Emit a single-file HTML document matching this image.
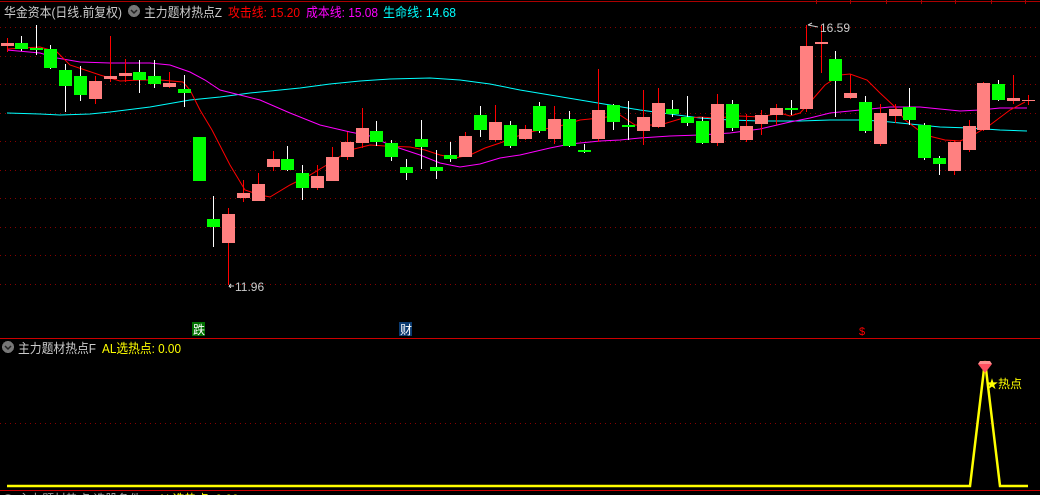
<!DOCTYPE html>
<html><head><meta charset="utf-8"><style>
html,body{margin:0;padding:0;background:#000;width:1040px;height:495px;overflow:hidden}
svg{display:block}
text{font-family:"Liberation Sans","Noto Sans CJK SC",sans-serif}
</style></head><body>
<svg width="1040" height="495" viewBox="0 0 1040 495" xmlns="http://www.w3.org/2000/svg" shape-rendering="crispEdges">
<rect width="1040" height="495" fill="#000"/>
<line x1="0" y1="1.5" x2="1040" y2="1.5" stroke="#a00" stroke-width="1"/>
<g stroke="#800" stroke-width="1" stroke-dasharray="1,4">
<line x1="0" y1="27.5" x2="1040" y2="27.5"/><line x1="0" y1="56.5" x2="1040" y2="56.5"/><line x1="0" y1="84.5" x2="1040" y2="84.5"/><line x1="0" y1="113.5" x2="1040" y2="113.5"/><line x1="0" y1="141.5" x2="1040" y2="141.5"/><line x1="0" y1="170.5" x2="1040" y2="170.5"/><line x1="0" y1="198.5" x2="1040" y2="198.5"/><line x1="0" y1="227.5" x2="1040" y2="227.5"/><line x1="0" y1="255.5" x2="1040" y2="255.5"/><line x1="0" y1="284.5" x2="1040" y2="284.5"/><line x1="0" y1="423.5" x2="1040" y2="423.5"/>
</g>
<line x1="0" y1="338.5" x2="1040" y2="338.5" stroke="#c00"/>
<line x1="0" y1="490.5" x2="1040" y2="490.5" stroke="#c00"/>
<g stroke="#a00"><line x1="816.5" y1="0" x2="816.5" y2="4"/><line x1="850.5" y1="0" x2="850.5" y2="4"/><line x1="886.5" y1="0" x2="886.5" y2="4"/><line x1="921.5" y1="0" x2="921.5" y2="4"/><line x1="955.5" y1="0" x2="955.5" y2="4"/><line x1="991.5" y1="0" x2="991.5" y2="4"/><line x1="1025.5" y1="0" x2="1025.5" y2="4"/></g>

<g fill="none" stroke-width="1" shape-rendering="auto">
<polyline stroke="#00ffff" points="7,113 40,114 60,115 90,114 110,112 150,107 190,100 220,97 250,93 300,88 330,84 360,81 390,79 430,78 460,80 490,84 520,90 550,95 580,100 610,105 640,110 670,114 700,118 730,120 760,121 800,121 830,120 860,120 880,121 900,123 940,127 970,128 1000,130 1027,131"/>
<polyline stroke="#ff00ff" points="7,50 40,53 57,58 80,62 110,63 150,63 170,65 190,72 205,80 220,90 240,95 260,100 290,113 320,125 350,132 370,136 390,145 420,155 440,163 460,167 480,164 500,158 520,155 550,148 570,144 600,141 620,140 640,138 670,136 700,135 730,133 760,129 790,122 810,118 830,113 850,111 870,109 890,107 920,107 940,109 960,111 980,110 1000,108 1027,108"/>
<polyline stroke="#ff0000" points="7,49 40,47 57,52 70,65 100,75 120,81 140,80 160,80 183,82 190,90 200,110 212,130 230,165 245,190 260,195 270,197 290,185 310,175 330,163 350,150 370,145 385,146 410,147 425,150 440,155 455,158 470,155 485,148 500,143 515,137 530,132 560,126 580,120 600,118 620,115 635,125 660,125 680,119 700,117 715,118 740,116 760,117 780,113 790,116 800,113 812,100 825,85 840,75 850,74 867,80 880,93 895,107 905,120 925,135 945,140 960,141 970,137 990,125 1010,110 1025,102"/>
</g>

<g>
<line x1="7.5" y1="38" x2="7.5" y2="52" stroke="#f00"/><rect x="1" y="43" width="13" height="3" fill="#ff8080"/>
<line x1="21.5" y1="36" x2="21.5" y2="51" stroke="#fff"/><rect x="15" y="43" width="13" height="6" fill="#00ff00"/>
<line x1="36.5" y1="25" x2="36.5" y2="55" stroke="#fff"/><rect x="30" y="48" width="13" height="2" fill="#00ff00"/>
<line x1="50.5" y1="45" x2="50.5" y2="69" stroke="#fff"/><rect x="44" y="49" width="13" height="19" fill="#00ff00"/>
<line x1="65.5" y1="64" x2="65.5" y2="112" stroke="#fff"/><rect x="59" y="70" width="13" height="16" fill="#00ff00"/>
<line x1="80.5" y1="66" x2="80.5" y2="101" stroke="#fff"/><rect x="74" y="76" width="13" height="19" fill="#00ff00"/>
<line x1="95.5" y1="76" x2="95.5" y2="104" stroke="#f00"/><rect x="89" y="81" width="13" height="18" fill="#ff8080"/>
<line x1="110.5" y1="36" x2="110.5" y2="82" stroke="#f00"/><rect x="104" y="76" width="13" height="3" fill="#ff8080"/>
<line x1="125.5" y1="59" x2="125.5" y2="82" stroke="#f00"/><rect x="119" y="73" width="13" height="3" fill="#ff8080"/>
<line x1="139.5" y1="60" x2="139.5" y2="93" stroke="#fff"/><rect x="133" y="72" width="13" height="8" fill="#00ff00"/>
<line x1="154.5" y1="60" x2="154.5" y2="88" stroke="#fff"/><rect x="148" y="76" width="13" height="8" fill="#00ff00"/>
<line x1="169.5" y1="72" x2="169.5" y2="88" stroke="#f00"/><rect x="163" y="83" width="13" height="4" fill="#ff8080"/>
<line x1="184.5" y1="75" x2="184.5" y2="107" stroke="#fff"/><rect x="178" y="89" width="13" height="4" fill="#00ff00"/>
<rect x="193" y="137" width="13" height="44" fill="#00ff00"/>
<line x1="213.5" y1="196" x2="213.5" y2="247" stroke="#fff"/><rect x="207" y="219" width="13" height="8" fill="#00ff00"/>
<line x1="228.5" y1="208" x2="228.5" y2="285" stroke="#f00"/><rect x="222" y="214" width="13" height="29" fill="#ff8080"/>
<line x1="243.5" y1="180" x2="243.5" y2="202" stroke="#f00"/><rect x="237" y="193" width="13" height="5" fill="#ff8080"/>
<line x1="258.5" y1="173" x2="258.5" y2="201" stroke="#f00"/><rect x="252" y="184" width="13" height="17" fill="#ff8080"/>
<line x1="273.5" y1="151" x2="273.5" y2="171" stroke="#f00"/><rect x="267" y="159" width="13" height="8" fill="#ff8080"/>
<line x1="287.5" y1="146" x2="287.5" y2="171" stroke="#fff"/><rect x="281" y="159" width="13" height="11" fill="#00ff00"/>
<line x1="302.5" y1="165" x2="302.5" y2="200" stroke="#fff"/><rect x="296" y="173" width="13" height="15" fill="#00ff00"/>
<line x1="317.5" y1="165" x2="317.5" y2="190" stroke="#f00"/><rect x="311" y="176" width="13" height="12" fill="#ff8080"/>
<line x1="332.5" y1="147" x2="332.5" y2="181" stroke="#f00"/><rect x="326" y="157" width="13" height="24" fill="#ff8080"/>
<line x1="347.5" y1="132" x2="347.5" y2="160" stroke="#f00"/><rect x="341" y="142" width="13" height="15" fill="#ff8080"/>
<line x1="362.5" y1="108" x2="362.5" y2="148" stroke="#f00"/><rect x="356" y="128" width="13" height="15" fill="#ff8080"/>
<line x1="376.5" y1="121" x2="376.5" y2="146" stroke="#fff"/><rect x="370" y="131" width="13" height="11" fill="#00ff00"/>
<line x1="391.5" y1="140" x2="391.5" y2="161" stroke="#fff"/><rect x="385" y="143" width="13" height="14" fill="#00ff00"/>
<line x1="406.5" y1="159" x2="406.5" y2="180" stroke="#fff"/><rect x="400" y="167" width="13" height="6" fill="#00ff00"/>
<line x1="421.5" y1="120" x2="421.5" y2="169" stroke="#fff"/><rect x="415" y="139" width="13" height="8" fill="#00ff00"/>
<line x1="436.5" y1="150" x2="436.5" y2="179" stroke="#fff"/><rect x="430" y="167" width="13" height="4" fill="#00ff00"/>
<line x1="450.5" y1="142" x2="450.5" y2="162" stroke="#fff"/><rect x="444" y="155" width="13" height="4" fill="#00ff00"/>
<line x1="465.5" y1="132" x2="465.5" y2="157" stroke="#f00"/><rect x="459" y="136" width="13" height="21" fill="#ff8080"/>
<line x1="480.5" y1="106" x2="480.5" y2="137" stroke="#fff"/><rect x="474" y="115" width="13" height="15" fill="#00ff00"/>
<line x1="495.5" y1="105" x2="495.5" y2="142" stroke="#f00"/><rect x="489" y="122" width="13" height="18" fill="#ff8080"/>
<line x1="510.5" y1="121" x2="510.5" y2="148" stroke="#fff"/><rect x="504" y="125" width="13" height="21" fill="#00ff00"/>
<line x1="525.5" y1="125" x2="525.5" y2="140" stroke="#f00"/><rect x="519" y="129" width="13" height="10" fill="#ff8080"/>
<line x1="539.5" y1="102" x2="539.5" y2="133" stroke="#fff"/><rect x="533" y="106" width="13" height="25" fill="#00ff00"/>
<line x1="554.5" y1="106" x2="554.5" y2="144" stroke="#f00"/><rect x="548" y="119" width="13" height="20" fill="#ff8080"/>
<line x1="569.5" y1="111" x2="569.5" y2="147" stroke="#fff"/><rect x="563" y="119" width="13" height="27" fill="#00ff00"/>
<line x1="584.5" y1="144" x2="584.5" y2="153" stroke="#fff"/><rect x="578" y="150" width="13" height="2" fill="#00ff00"/>
<line x1="598.5" y1="69" x2="598.5" y2="142" stroke="#f00"/><rect x="592" y="110" width="13" height="29" fill="#ff8080"/>
<line x1="613.5" y1="104" x2="613.5" y2="130" stroke="#fff"/><rect x="607" y="105" width="13" height="17" fill="#00ff00"/>
<line x1="628.5" y1="101" x2="628.5" y2="140" stroke="#fff"/><rect x="622" y="125" width="13" height="2" fill="#00ff00"/>
<line x1="643.5" y1="90" x2="643.5" y2="145" stroke="#f00"/><rect x="637" y="117" width="13" height="14" fill="#ff8080"/>
<line x1="658.5" y1="88" x2="658.5" y2="128" stroke="#f00"/><rect x="652" y="103" width="13" height="24" fill="#ff8080"/>
<line x1="672.5" y1="100" x2="672.5" y2="117" stroke="#fff"/><rect x="666" y="109" width="13" height="5" fill="#00ff00"/>
<line x1="687.5" y1="96" x2="687.5" y2="126" stroke="#fff"/><rect x="681" y="117" width="13" height="6" fill="#00ff00"/>
<line x1="702.5" y1="117" x2="702.5" y2="144" stroke="#fff"/><rect x="696" y="121" width="13" height="22" fill="#00ff00"/>
<line x1="717.5" y1="94" x2="717.5" y2="146" stroke="#f00"/><rect x="711" y="104" width="13" height="39" fill="#ff8080"/>
<line x1="732.5" y1="100" x2="732.5" y2="131" stroke="#fff"/><rect x="726" y="104" width="13" height="24" fill="#00ff00"/>
<line x1="746.5" y1="114" x2="746.5" y2="142" stroke="#f00"/><rect x="740" y="126" width="13" height="14" fill="#ff8080"/>
<line x1="761.5" y1="110" x2="761.5" y2="135" stroke="#f00"/><rect x="755" y="115" width="13" height="9" fill="#ff8080"/>
<line x1="776.5" y1="104" x2="776.5" y2="125" stroke="#f00"/><rect x="770" y="108" width="13" height="7" fill="#ff8080"/>
<line x1="791.5" y1="100" x2="791.5" y2="115" stroke="#fff"/><rect x="785" y="108" width="13" height="2" fill="#00ff00"/>
<line x1="806.5" y1="25" x2="806.5" y2="112" stroke="#f00"/><rect x="800" y="46" width="13" height="63" fill="#ff8080"/>
<line x1="821.5" y1="25" x2="821.5" y2="73" stroke="#f00"/><rect x="815" y="42" width="13" height="2" fill="#ff8080"/>
<line x1="835.5" y1="51" x2="835.5" y2="117" stroke="#fff"/><rect x="829" y="59" width="13" height="22" fill="#00ff00"/>
<line x1="850.5" y1="74" x2="850.5" y2="99" stroke="#f00"/><rect x="844" y="93" width="13" height="5" fill="#ff8080"/>
<line x1="865.5" y1="96" x2="865.5" y2="133" stroke="#fff"/><rect x="859" y="102" width="13" height="29" fill="#00ff00"/>
<line x1="880.5" y1="104" x2="880.5" y2="146" stroke="#f00"/><rect x="874" y="113" width="13" height="31" fill="#ff8080"/>
<line x1="895.5" y1="104" x2="895.5" y2="123" stroke="#f00"/><rect x="889" y="109" width="13" height="7" fill="#ff8080"/>
<line x1="909.5" y1="88" x2="909.5" y2="125" stroke="#fff"/><rect x="903" y="107" width="13" height="13" fill="#00ff00"/>
<line x1="924.5" y1="123" x2="924.5" y2="160" stroke="#fff"/><rect x="918" y="125" width="13" height="33" fill="#00ff00"/>
<line x1="939.5" y1="156" x2="939.5" y2="175" stroke="#fff"/><rect x="933" y="158" width="13" height="6" fill="#00ff00"/>
<line x1="954.5" y1="140" x2="954.5" y2="175" stroke="#f00"/><rect x="948" y="142" width="13" height="29" fill="#ff8080"/>
<line x1="969.5" y1="120" x2="969.5" y2="152" stroke="#f00"/><rect x="963" y="126" width="13" height="24" fill="#ff8080"/>
<line x1="983.5" y1="82" x2="983.5" y2="131" stroke="#f00"/><rect x="977" y="83" width="13" height="47" fill="#ff8080"/>
<line x1="998.5" y1="80" x2="998.5" y2="101" stroke="#fff"/><rect x="992" y="84" width="13" height="16" fill="#00ff00"/>
<line x1="1013.5" y1="75" x2="1013.5" y2="104" stroke="#f00"/><rect x="1007" y="98" width="13" height="3" fill="#ff8080"/>
<line x1="1028.5" y1="95" x2="1028.5" y2="105" stroke="#f00"/><rect x="1022" y="100" width="13" height="1" fill="#ff8080"/>
</g>

<text x="820" y="32" font-size="12" fill="#ccc">16.59</text>
<path d="M808 25 L812 23 M808 25 L818 27" stroke="#ccc" fill="none" shape-rendering="auto"/>
<text x="235" y="291" font-size="12" fill="#ccc">11.96</text>
<path d="M229 286 L234 286 M229 286 L231 284 M229 286 L231 288" stroke="#ccc" fill="none"/>

<rect x="192" y="322" width="13" height="14" fill="#007000"/>
<text x="193" y="334" font-size="12" fill="#fff">跌</text>
<rect x="399" y="322" width="13" height="14" fill="#0a3a70"/>
<text x="400" y="334" font-size="12" fill="#fff">财</text>
<text x="859" y="335" font-size="11" fill="#f00">$</text>

<text x="4" y="17" font-size="13" fill="#ccc" textLength="118" lengthAdjust="spacingAndGlyphs">华金资本(日线.前复权)</text>
<circle cx="134" cy="11" r="6" fill="#777"/>
<path d="M131 10 L134 13 L137 10" stroke="#222" stroke-width="1.5" fill="none" shape-rendering="auto"/>
<text x="144" y="17" font-size="13" fill="#ccc" textLength="78" lengthAdjust="spacingAndGlyphs">主力题材热点Z</text>
<text x="228" y="17" font-size="13" fill="#f00" textLength="72" lengthAdjust="spacingAndGlyphs">攻击线: 15.20</text>
<text x="306" y="17" font-size="13" fill="#f0f" textLength="72" lengthAdjust="spacingAndGlyphs">成本线: 15.08</text>
<text x="383" y="17" font-size="13" fill="#0ff" textLength="73" lengthAdjust="spacingAndGlyphs">生命线: 14.68</text>

<circle cx="8" cy="347" r="6" fill="#777"/>
<path d="M5 346 L8 349 L11 346" stroke="#222" stroke-width="1.5" fill="none" shape-rendering="auto"/>
<text x="18" y="353" font-size="13" fill="#ccc" textLength="78" lengthAdjust="spacingAndGlyphs">主力题材热点F</text>
<text x="102" y="353" font-size="13" fill="#ff0" textLength="79" lengthAdjust="spacingAndGlyphs">AL选热点: 0.00</text>

<polyline points="7,486 970,486 985,361 1000,486 1028,486" fill="none" stroke="#ff0" stroke-width="2.5" shape-rendering="auto"/>
<path d="M978 364 L992 364 L985 373 Z" fill="#ff5060" shape-rendering="auto"/>
<path d="M980 361 L990 361 L992 364 L978 364 Z" fill="#ff9090" shape-rendering="auto"/>
<text x="986" y="388" font-size="12" fill="#ff0">★热点</text>

<circle cx="8" cy="499" r="5" fill="#666"/>
<text x="18" y="503" font-size="12" fill="#aaa">主力题材热点 选股条件</text>
<text x="158" y="503" font-size="12" fill="#ff0">AL选热点: 0.00</text>
</svg>
</body></html>
